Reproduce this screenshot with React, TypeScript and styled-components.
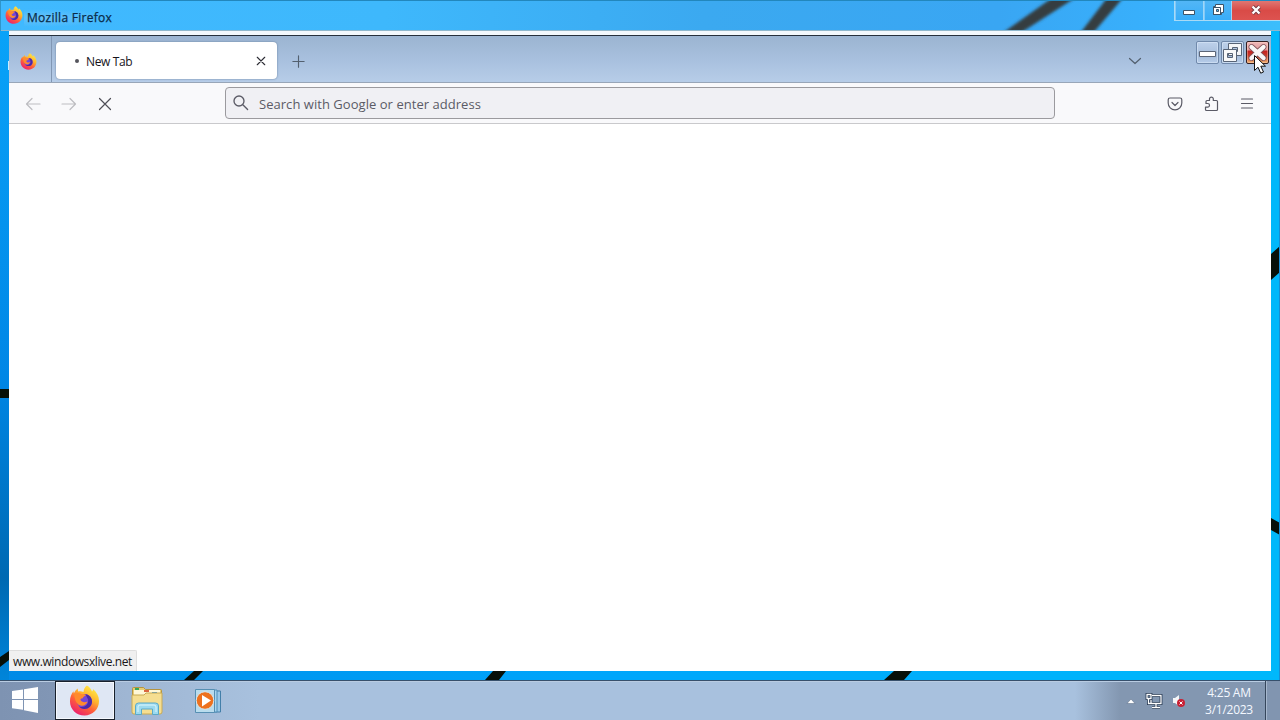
import React from "react";
import styled, { createGlobalStyle } from "styled-components";

const GlobalStyle = createGlobalStyle`
  * { box-sizing: border-box; }
  body { margin: 0; overflow: hidden; font-family: "Open Sans", "Noto Sans", sans-serif; }
  svg { display: block; flex: none; }
`;

const Desktop = styled.div`
  position: relative;
  width: 1280px;
  height: 720px;
  display: flex;
  flex-direction: column;
  overflow: hidden;
`;
const Wallpaper = styled.svg`
  position: absolute;
  inset: 0;
`;
const Window = styled.main`
  position: relative;
  height: 680px;
  display: flex;
  flex-direction: column;
  padding: 0 9px 9px;
`;
const TitleBar = styled.header`
  height: 31px;
  flex: none;
  margin: 0 -9px;
  display: flex;
  align-items: flex-start;
  border-top: 1px solid #2287bd;
  border-left: 1px solid #3095ca;
  padding-left: 4px;
`;
const TitleIcon = styled.div`
  margin-top: 5px;
`;
const TitleText = styled.div`
  margin: 8px 0 0 1px;
  padding: 0 2px 0 3px;
  font-size: 12px;
  line-height: 18px;
  letter-spacing: 0.28px;
  color: #092c49;
  -webkit-text-stroke: 0.25px #092c49;
  background: radial-gradient(ellipse at 20% 50%, #a5cff366, #a5cff300 70%);
`;
const CaptionButtons = styled.div`
  margin-left: auto;
  display: flex;
  height: 20px;
  border: solid #a9daf5;
  border-width: 0 0 1px 1px;
`;
const CaptionButton = styled.div<{ $w: number; $close?: boolean }>`
  width: ${(p) => p.$w}px;
  display: grid;
  place-items: center;
  padding-right: 1px;
  padding-bottom: 1px;
  border-left: ${(p) => (p.$close ? "0" : "1px solid #82cafa")};
  border-right: ${(p) => (p.$close ? "0" : "1px solid #9fd6f6")};
  background: ${(p) => (p.$close ? "linear-gradient(#df7772, #d94b47 50%, #dd5350)" : "linear-gradient(#52b6f6, #38adf8)")};
`;
const Client = styled.section`
  flex: 1;
  display: flex;
  flex-direction: column;
  background: #fff;
`;
const ClientEdge = styled.div`
  height: 5px;
  flex: none;
  background: #f2f8fd;
  border-bottom: 1px solid #25303c;
`;
const TabStrip = styled.div`
  height: 47px;
  flex: none;
  display: flex;
  background: linear-gradient(#9bb4d1, #a9c1df 55%, #b7cde8);
  border-bottom: 1px solid #98a6b8;
`;
const ViewButton = styled.div`
  width: 43px;
  height: 46px;
  padding: 17px 0 0 11px;
  border-right: 1px solid #8197b4;
`;
const Tab = styled.div`
  display: flex;
  align-items: center;
  width: 221px;
  height: 37px;
  margin: 6px 0 0 4px;
  padding: 1px 10px 0 19px;
  border-radius: 4px;
  background: #fff;
  box-shadow: 0 0 2px #5d7696;
  font-size: 12px;
  color: #15141a;
`;
const LoadingDot = styled.i`
  width: 4px;
  height: 4px;
  margin-right: 7px;
  border-radius: 50%;
  background: #55555d;
`;
const TabTitle = styled.span`
  flex: 1;
  padding-top: 1px;
  letter-spacing: -0.35px;
`;
const NewTab = styled.div`
  padding: 18px 0 0 14px;
`;
const AllTabs = styled.div`
  margin: 17px 53px 0 auto;
`;
const InnerButtons = styled.div`
  position: relative;
  display: flex;
  gap: 2px;
  padding: 5px 2px 0 0;
`;
const InnerButton = styled.div<{ $close?: boolean }>`
  width: 23px;
  height: 23px;
  border: 1px solid ${(p) => (p.$close ? "#321e22" : "#7089ab")};
  border-radius: 2px;
  background: ${(p) => (p.$close ? "linear-gradient(#efb9bb, #e29a9a 38%, #c41f20 43%, #c83c2a 65%, #efb26f)" : "linear-gradient(#bed1eb, #acc2df 48%, #9cb4d3 50%, #b7cdea)")};
  box-shadow: inset 0 0 0 1px ${(p) => (p.$close ? "#ffd4c266" : "#d8e7f999")};
`;
const Pointer = styled.svg`
  position: absolute;
  left: 57px;
  top: 18px;
`;
const Toolbar = styled.nav`
  height: 41px;
  flex: none;
  display: flex;
  align-items: center;
  padding: 0 16px;
  background: #f9f9fb;
  border-bottom: 1px solid #c9c9cc;
`;
const NavButtons = styled.div`
  display: flex;
  gap: 20px;
  width: 200px;
  padding-top: 2px;
`;
const AddressBar = styled.div`
  width: 830px;
  height: 32px;
  display: flex;
  align-items: center;
  padding-left: 7px;
  border: 1px solid #9b9a9e;
  border-radius: 4px;
  background: #f0f0f4;
  color: #5b5b66;
`;
const Placeholder = styled.span`
  margin-left: 10px;
  padding-top: 2px;
  font-size: 13px;
  line-height: 18px;
  letter-spacing: 0.04px;
`;
const ToolbarActions = styled.div`
  margin-left: auto;
  display: flex;
  gap: 20px;
  padding-top: 1px;
`;
const Page = styled.div`
  flex: 1;
  display: flex;
  align-items: flex-end;
`;
const LinkStatus = styled.div`
  width: 128px;
  height: 21px;
  padding-left: 4px;
  border: solid #dedede;
  border-width: 1px 1px 0 0;
  border-radius: 0 2px 0 0;
  background: #f0f0f0;
  color: #181818;
  font-size: 12px;
  line-height: 22px;
  white-space: nowrap;
  letter-spacing: -0.4px;
`;
const Taskbar = styled.footer`
  position: relative;
  height: 40px;
  display: flex;
  border-top: 1px solid #37506c;
  background: linear-gradient(90deg, #7e93b2 0, #8196b5 54px, #9eb5d2 115px, #a8c1de 260px, #a8c1de 1075px, #8397b1 1120px, #8397b1);
  box-shadow: inset 0 1px #b9cce2;
`;
const Launcher = styled.div<{ $w: number; $shift?: number; $drop?: number; $active?: boolean }>`
  width: ${(p) => p.$w}px;
  height: 39px;
  display: grid;
  place-items: center;
  padding: ${(p) => p.$drop ?? 0}px ${(p) => p.$shift ?? 0}px 1px 0;
  border: ${(p) => (p.$active ? "1px solid #17202c" : "0")};
  background: ${(p) => (p.$active ? "#dfe7f4" : "transparent")};
  box-shadow: ${(p) => (p.$active ? "inset 0 0 0 1px #f5f8fd" : "none")};
`;
const Tray = styled.div`
  margin-left: auto;
  display: flex;
  align-items: center;
  gap: 10px;
  padding: 0 6px 0 0;
`;
const TrayIcons = styled.div`
  display: flex;
  align-items: center;
  gap: 9px;
`;
const Clock = styled.div`
  width: 60px;
  margin-left: 3px;
  text-align: center;
  color: #f4f8ff;
  font-size: 12px;
  line-height: 17px;
  letter-spacing: -0.25px;
`;
const ShowDesktop = styled.div`
  width: 15px;
  border-left: 1px solid #35465b;
  background: #8195b0;
  box-shadow: inset 1px 0 #a7b8ce;
`;

function Firefox({ size, id }: { size: number; id: string }) {
  return (
    <svg width={size} height={size} viewBox="0 0 32 32">
      <defs>
        <linearGradient id={id} x1=".85" y1=".05" x2=".25" y2="1">
          <stop offset="0" stopColor="#fff04b" />
          <stop offset=".35" stopColor="#ffb52e" />
          <stop offset=".62" stopColor="#ff6238" />
          <stop offset="1" stopColor="#e91c72" />
        </linearGradient>
      </defs>
      <path fill={`url(#${id})`} d="M18.500.5c3.100 1.700 4.700 4.200 5.200 6.300.9-.7 1.200-1.800 1-2.600 4 3.100 6.300 7.600 6.300 12.400C31 25 24.400 31.500 16 31.500S1 25 1 16.700c0-4 1.500-7.500 3.600-10.200l.4 2.300c1-2.300 2.400-4 4-5.200l.4 3.200c1.900-.5 3.900-.3 5.600.4C15 4.700 16.300 2.200 18.500.5z" />
      <circle cx="16" cy="17" r="7.700" fill="#7546d7" />
      <path fill="#4c2aa5" d="M17 9.500c4 .5 6.800 3.700 6.700 7.700-.1 4.300-3.500 7.500-7.700 7.500-2.300 0-4.400-1-5.800-2.500 5.300 1.900 10.500-1.600 9.500-7.200z" />
      <path fill="#ff8b2d" d="M5.500 9.500c2.500-1.800 5-1.600 7-.1 1.800-.4 3.800.1 5 1.200-.9.400-3 1.700-3.400 3.200-1 .2-2 .4-2.300 1.200.8 3.200 4.700 3.300 7.300 2.100-.9 3-3.600 4.800-6.500 4.300-4-.7-6.800-5-7.100-11.900z" />
    </svg>
  );
}

function Stroke({ d, color = "#5b5b66", size = 16, width = 1.2 }: { d: string; color?: string; size?: number; width?: number }) {
  return (
    <svg width={size} height={size} viewBox="0 0 16 16" fill="none" stroke={color} strokeWidth={width} strokeLinecap="round" strokeLinejoin="round">
      <path d={d} />
    </svg>
  );
}

function Background() {
  return (
    <Wallpaper width="1280" height="680" viewBox="0 0 1280 680">
      <defs>
        <linearGradient id="base"><stop stopColor="#008ae6" /><stop offset=".45" stopColor="#00a5fb" /><stop offset="1" stopColor="#00b8fb" /></linearGradient>
        <linearGradient id="leftEdge" x2="0" y2="1"><stop stopColor="#0aa5fa" /><stop offset=".55" stopColor="#0087e6" /><stop offset=".85" stopColor="#0069b2" /><stop offset="1" stopColor="#0085da" /></linearGradient>
        <linearGradient id="glass"><stop stopColor="#40b9ff" /><stop offset=".3" stopColor="#3eb8fc" /><stop offset=".55" stopColor="#3ba9f0" /><stop offset=".78" stopColor="#39a6f3" /><stop offset=".9" stopColor="#38b0fc" /><stop offset="1" stopColor="#3bbefc" /></linearGradient>
        <filter id="soft"><feGaussianBlur stdDeviation="1.5" /></filter>
      </defs>
      <path fill="url(#base)" d="M0 0h1280v680H0z" />
      <path fill="url(#leftEdge)" d="M0 0h9v680H0z" />
      <path fill="url(#glass)" d="M0 0h1280v31H0z" />
      <g fill="#343d40" filter="url(#soft)"><path d="M1004 32 1052-2h23l-53 34zM1081 32l26-34h16l-29 34z" /></g>
      <path fill="#071008" d="M0 389h9v9H0zM0 657l9-6v9l-9 7zM1271 254l9-8v26l-9 8zM1271 518l9 5v12l-9-5z" />
      <path fill="#071008" d="M194 671h9l-9 9h-10zM493 671h13l-7 9h-14zM894 671h18l-8 9h-20z" />
      <path stroke="#8fb7cc" d="M0 30.500h1280" />
      <path stroke="#168ed5" d="M1279.500 31v649" />
      <path stroke="#c9edff" d="M8.500 61v9" />
    </Wallpaper>
  );
}

export default function App() {
  return (
    <>
      <GlobalStyle />
      <Desktop>
        <Background />
        <Window>
          <TitleBar>
            <TitleIcon><Firefox size={18} id="titleFlame" /></TitleIcon>
            <TitleText>Mozilla Firefox</TitleText>
            <CaptionButtons>
              <CaptionButton $w={29}>
                <svg width="14" height="10" viewBox="0 0 14 10"><path d="M1.500 5.500h11v4h-11z" fill="#fff" stroke="#3b5368" /></svg>
              </CaptionButton>
              <CaptionButton $w={28}>
                <svg width="14" height="14" viewBox="0 0 14 14"><path d="M4.500 1.500h8v8h-2v2h-8v-8h2z" fill="#fff" stroke="#3b5368" /><path d="M2.500 4.500h7v7h-7z" fill="none" stroke="#3b5368" /><path d="M5.500 6.500h2v2h-2z" fill="#59b6ee" stroke="#3b5368" /></svg>
              </CaptionButton>
              <CaptionButton $w={48} $close>
                <svg width="12" height="12" viewBox="0 0 12 12"><path d="m2.500 2.500 7 7m0-7-7 7" stroke="#773b43" strokeWidth="4" /><path d="m2.500 2.500 7 7m0-7-7 7" stroke="#fff" strokeWidth="2.300" /></svg>
              </CaptionButton>
            </CaptionButtons>
          </TitleBar>
          <Client>
            <ClientEdge />
            <TabStrip>
              <ViewButton><Firefox size={17} id="viewFlame" /></ViewButton>
              <Tab>
                <LoadingDot />
                <TabTitle>New Tab</TabTitle>
                <Stroke size={12} width={1.500} color="#2d2d35" d="m3 3 10 10M13 3 3 13" />
              </Tab>
              <NewTab><Stroke size={15} color="#53606f" d="M8 2v12M2 8h12" /></NewTab>
              <AllTabs><Stroke color="#53606f" d="m2.500 5.500 5.500 5 5.500-5" /></AllTabs>
              <InnerButtons>
                <InnerButton><svg width="21" height="21" viewBox="0 0 21 21"><path d="M2.500 9.500h16v5h-16z" fill="#fff" stroke="#5c6678" /></svg></InnerButton>
                <InnerButton><svg width="21" height="21" viewBox="0 0 21 21"><path fillRule="evenodd" d="M6.500 1.500h13v12h-13zM10.500 5.500v4h5v-4z" fill="#f5f6f8" stroke="#586476" /><path fillRule="evenodd" d="M1.500 7.500h13v12h-13zM5.500 11.500v4h5v-4z" fill="#f8f9fa" stroke="#586476" /></svg></InnerButton>
                <InnerButton $close><svg width="21" height="21" viewBox="0 0 21 21"><path d="m4.500 5 12 11m0-11-12 11" stroke="#805058" strokeWidth="5.800" strokeLinecap="round" /><path d="m4.500 5 12 11m0-11-12 11" stroke="#f8f6f6" strokeWidth="4.400" strokeLinecap="round" /></svg></InnerButton>
                <Pointer width="14" height="22" viewBox="0 0 14 22"><path d="M1.500 1.500v15l3.500-3.300 2.700 6 2.800-1.200-2.700-5.800h4.700z" fill="#fff" stroke="#111" /></Pointer>
              </InnerButtons>
            </TabStrip>
            <Toolbar>
              <NavButtons>
                <Stroke color="#bdbdc1" d="M15 8H1.500M7 2.500 1.500 8 7 13.500" />
                <Stroke color="#bdbdc1" d="M1 8h13.500M9 2.500 14.500 8 9 13.500" />
                <Stroke color="#4f4f57" d="m2.500 2.500 11 11m0-11-11 11" />
              </NavButtons>
              <AddressBar>
                <Stroke width={1.35} d="M11 6a5 5 0 1 1-10 0 5 5 0 0 1 10 0zM9.600 9.600l5 5" />
                <Placeholder>Search with Google or enter address</Placeholder>
              </AddressBar>
              <ToolbarActions>
                <Stroke d="M3 2h10q1.800 0 1.800 1.800V7a6.800 6.800 0 0 1-13.600 0V3.800Q1.200 2 3 2zM5 6.500l3 3 3-3" />
                <Stroke d="M3.500 14.500h10q1 0 1-1V5.500q0-1-1-1H10.300V3a1.900 1.900 0 0 0-3.800 0v1.500H4q-1 0-1 1v2h1.700a1.800 1.800 0 0 1 0 3.600H2.500v2.400q0 1 1 1z" />
                <Stroke d="M2.500 3h11M2.500 7.500h11M2.500 12h11" />
              </ToolbarActions>
            </Toolbar>
            <Page><LinkStatus>www.windowsxlive.net</LinkStatus></Page>
          </Client>
        </Window>
        <Taskbar>
          <Launcher $w={55} $shift={5}>
            <svg width="28" height="26" viewBox="0 0 28 26"><path fill="#fff" d="M1 4 12 2.400V12H1zM13 2.300 27 0v12H13zM1 13h11v9.800L1 21.200zM13 13h14v13l-14-2.800z" /></svg>
          </Launcher>
          <Launcher $w={60} $active $shift={1}><Firefox size={31} id="taskFlame" /></Launcher>
          <Launcher $w={64} $drop={2}>
            <svg width="32" height="30" viewBox="0 0 32 30">
              <path d="M1.500 5V2.500q0-1 1-1h10l2 2h15q1 0 1 1V26h-29z" fill="#e8cc72" stroke="#b59440" />
              <path d="M3 4h26v5H3z" fill="#fff8d7" />
              <path d="M4 2h4v2H4z" fill="#35a85b" /><path d="M13 4h5v2h-5z" fill="#db6742" /><path d="M21 6h5v2h-5z" fill="#4a9bd7" />
              <path d="M1 9h12l2-2h16v19q0 2-2 2H3q-2 0-2-2z" fill="#f5de91" stroke="#c8aa55" />
              <path d="M4.500 28.500V20q0-3 3-3h17q3 0 3 3v8.500h-6V23h-11v5.500z" fill="#9cdaef" stroke="#5ba9c9" />
              <path d="M7 26v-5q0-2 2-2h14q2 0 2 2v5" fill="none" stroke="#dcf7ff" />
            </svg>
          </Launcher>
          <Launcher $w={60} $shift={2} $drop={2}>
            <svg width="28" height="26" viewBox="0 0 28 26">
              <path d="M10 3h16.500v21H10z" fill="#9cc9e8" stroke="#437fa9" /><path d="M6 2h17v22H6z" fill="#a9d5ee" stroke="#4f8fb8" /><path d="M1.500 1.500h19v23h-19z" fill="#b9dced" stroke="#568fb3" />
              <circle cx="11" cy="12.500" r="8.800" fill="#ed711e" stroke="#d8e7ec" /><path d="m8 7 9 5.500-9 6z" fill="#fff" />
            </svg>
          </Launcher>
          <Tray>
            <TrayIcons>
              <svg width="10" height="6" viewBox="0 0 10 6"><path d="m5 1 4 4.500H1z" fill="#fff" stroke="#536780" strokeWidth=".5" /></svg>
              <svg width="18" height="16" viewBox="0 0 18 16" fill="none"><path d="M7 2.500h9v8H6V7M11 11v3M7 14.500h8M3.500 6v4.500H6M2 1.500h4v4H2z" stroke="#20334d" strokeWidth="2.800" /><path d="M7 2.500h9v8H6V7M11 11v3M7 14.500h8M3.500 6v4.500H6M2 1.500h4v4H2z" stroke="#fff" strokeWidth="1.300" /></svg>
              <svg width="14" height="14" viewBox="0 0 14 14"><path d="M1 4h2l4-3v11L3 9H1z" fill="#f4f6f8" /><circle cx="9" cy="9" r="4" fill="#c82034" /><path d="m7.500 7.500 3 3m0-3-3 3" stroke="#fff" /></svg>
            </TrayIcons>
            <Clock>4:25 AM<br />3/1/2023</Clock>
          </Tray>
          <ShowDesktop />
        </Taskbar>
      </Desktop>
    </>
  );
}
